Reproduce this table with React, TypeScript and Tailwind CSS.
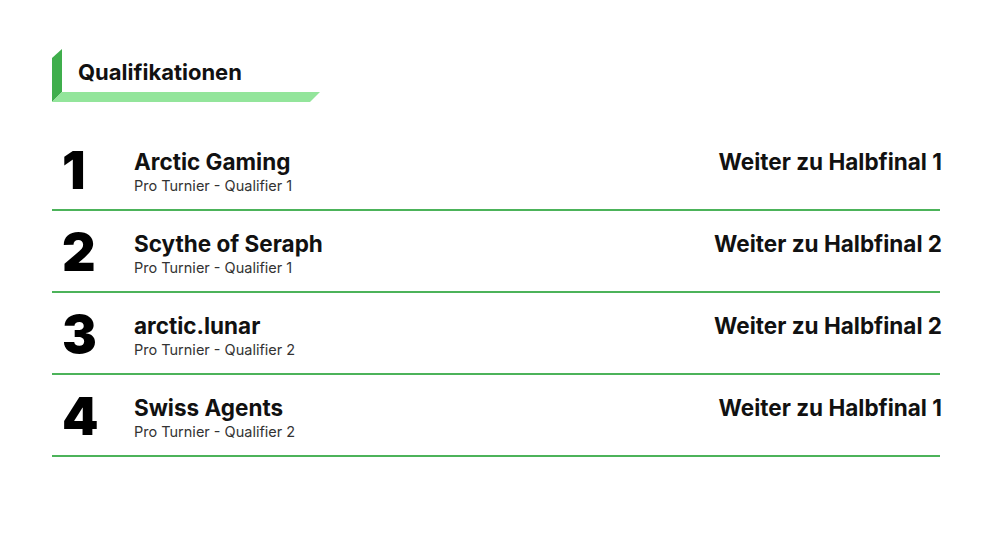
const rows = [
  { rank: 1, team: 'Arctic Gaming', sub: 'Pro Turnier - Qualifier 1', result: 'Weiter zu Halbfinal 1' },
  { rank: 2, team: 'Scythe of Seraph', sub: 'Pro Turnier - Qualifier 1', result: 'Weiter zu Halbfinal 2' },
  { rank: 3, team: 'arctic.lunar', sub: 'Pro Turnier - Qualifier 2', result: 'Weiter zu Halbfinal 2' },
  { rank: 4, team: 'Swiss Agents', sub: 'Pro Turnier - Qualifier 2', result: 'Weiter zu Halbfinal 1' },
];

function SectionTitle({ title }: { title: string }) {
  return (
    <div className="relative h-[54px] w-[270px]">
      <svg className="absolute left-0 top-0" width="270" height="54" viewBox="0 0 270 54">
        <polygon points="0,9 10,0 10,43 0,53" fill="#3fae4c" />
        <polygon points="0,53 10,43 268,43 258,53" fill="#93e59b" />
      </svg>
      <h2 className="relative pl-[26px] pt-[12px] text-[22px] font-bold leading-none text-[#111]">{title}</h2>
    </div>
  );
}

export default function App() {
  return (
    <div className="min-h-[558px] w-[992px] bg-white pl-[52px] pt-[49px] font-['Inter',sans-serif]">
      <SectionTitle title="Qualifikationen" />
      <ul className="mt-[26px] w-[888px]">
        {rows.map((row) => (
          <li key={row.rank} className="flex h-[82px] items-start border-b-2 border-[#4cb35a] pt-[17px]">
            <span className="w-[82px] pl-[10px] text-[52px] font-black leading-[50px] text-black">{row.rank}</span>
            <div className="mt-[2px] flex-grow">
              <div className="text-[22.5px] font-bold leading-[28px] text-[#111]">{row.team}</div>
              <div className="text-[14.5px] leading-[20px] text-[#333]">{row.sub}</div>
            </div>
            <span className="-mr-[2px] mt-[2px] text-[22.5px] font-bold leading-[28px] text-[#111]">{row.result}</span>
          </li>
        ))}
      </ul>
    </div>
  );
}
